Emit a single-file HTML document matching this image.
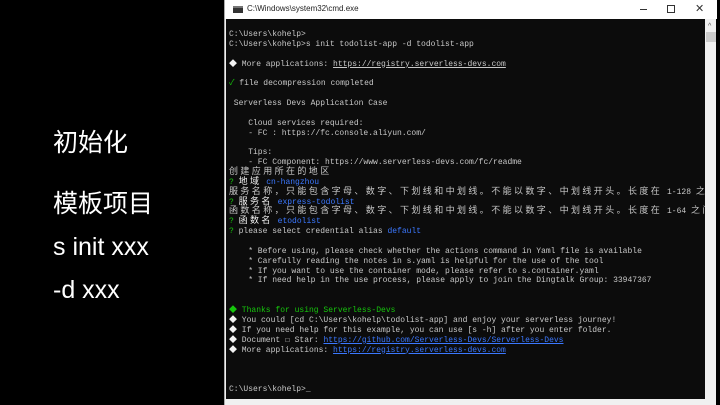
<!DOCTYPE html>
<html><head><meta charset="utf-8"><style>
*{margin:0;padding:0;box-sizing:border-box}
body{width:720px;height:405px;background:#000;position:relative;overflow:hidden;font-family:"Liberation Sans","Noto Sans CJK SC",sans-serif}
.left{position:absolute;left:53px;color:#fff;font-size:25px;font-family:"Liberation Sans","Noto Sans CJK SC",sans-serif;white-space:nowrap}
.win{position:absolute;left:224px;top:0;width:492px;height:405px;background:#f0f0f0;border-left:1px solid #aaa}
.title{position:absolute;left:0;top:0;width:492px;height:19px;background:#fff;font-size:8px;color:#222}
.title .ic{position:absolute;left:8px;top:6px;width:10px;height:7px;background:#333;border-top:2px solid #777}
.title .t{position:absolute;left:22px;top:4px}
.term{position:absolute;left:1px;top:19px;width:479px;height:380px;background:#0c0c0c;overflow:hidden}
.sb{position:absolute;left:481px;top:19px;width:10px;height:380px;background:#f0f0f0}
pre{position:absolute;left:3px;top:11px;font-family:"Liberation Mono","Noto Sans CJK SC",monospace;font-size:8px;line-height:9.86px;color:#c8c8c8;white-space:pre}
.g{color:#16c60c}.b{color:#3b78ff}.u{color:#3b78ff;text-decoration:underline}.w{color:#f2f2f2}
.c{font-size:9px;letter-spacing:2.4px}
</style></head><body>
<div class="left" style="top:123px">初始化</div>
<div class="left" style="top:184px">模板项目</div>
<div class="left" style="top:233px">s init xxx</div>
<div class="left" style="top:276px">-d xxx</div>
<div class="win">
<div class="title"><div class="ic"></div><div class="t">C:\Windows\system32\cmd.exe</div>
<div style="position:absolute;left:415px;top:9px;width:7px;height:1px;background:#333"></div>
<div style="position:absolute;left:442px;top:5px;width:8px;height:8px;border:1px solid #333"></div>
<div style="position:absolute;left:470px;top:2px;font-size:11px;color:#333">✕</div>
</div>
<div class="term"><pre>C:\Users\kohelp>
C:\Users\kohelp>s init todolist-app -d todolist-app

<span class="w">◆</span> More applications: <span style="text-decoration:underline">https://registry.serverless-devs.com</span>

<span class="g">✓</span> file decompression completed

 Serverless Devs Application Case

    Cloud services required:
    - FC : https://fc.console.aliyun.com/

    Tips:
    - FC Component: https://www.serverless-devs.com/fc/readme
<span class="c">创建应用所在的地区</span>
<span class="g">?</span> <span class="w c">地域</span> <span class="b">cn-hangzhou</span>
<span class="c">服务名称，只能包含字母、数字、下划线和中划线。不能以数字、中划线开头。长度在</span> 1-128 <span class="c">之间</span>
<span class="g">?</span> <span class="w c">服务名</span> <span class="b">express-todolist</span>
<span class="c">函数名称，只能包含字母、数字、下划线和中划线。不能以数字、中划线开头。长度在</span> 1-64 <span class="c">之间</span>
<span class="g">?</span> <span class="w c">函数名</span> <span class="b">etodolist</span>
<span class="g">?</span> please select credential alias <span class="b">default</span>

    * Before using, please check whether the actions command in Yaml file is available
    * Carefully reading the notes in s.yaml is helpful for the use of the tool
    * If you want to use the container mode, please refer to s.container.yaml
    * If need help in the use process, please apply to join the Dingtalk Group: 33947367


<span class="g">◆ Thanks for using Serverless-Devs</span>
<span class="w">◆</span> You could [cd C:\Users\kohelp\todolist-app] and enjoy your serverless journey!
<span class="w">◆</span> If you need help for this example, you can use [s -h] after you enter folder.
<span class="w">◆</span> Document ☐ Star: <span class="u">https://github.com/Serverless-Devs/Serverless-Devs</span>
<span class="w">◆</span> More applications: <span class="u">https://registry.serverless-devs.com</span>



C:\Users\kohelp>_</pre></div>
<div class="sb"><div style="position:absolute;top:4px;left:2px;font-size:7px;color:#555">^</div><div style="position:absolute;top:13px;left:0;width:10px;height:10px;background:#ccc"></div></div>
</div>
</body></html>
